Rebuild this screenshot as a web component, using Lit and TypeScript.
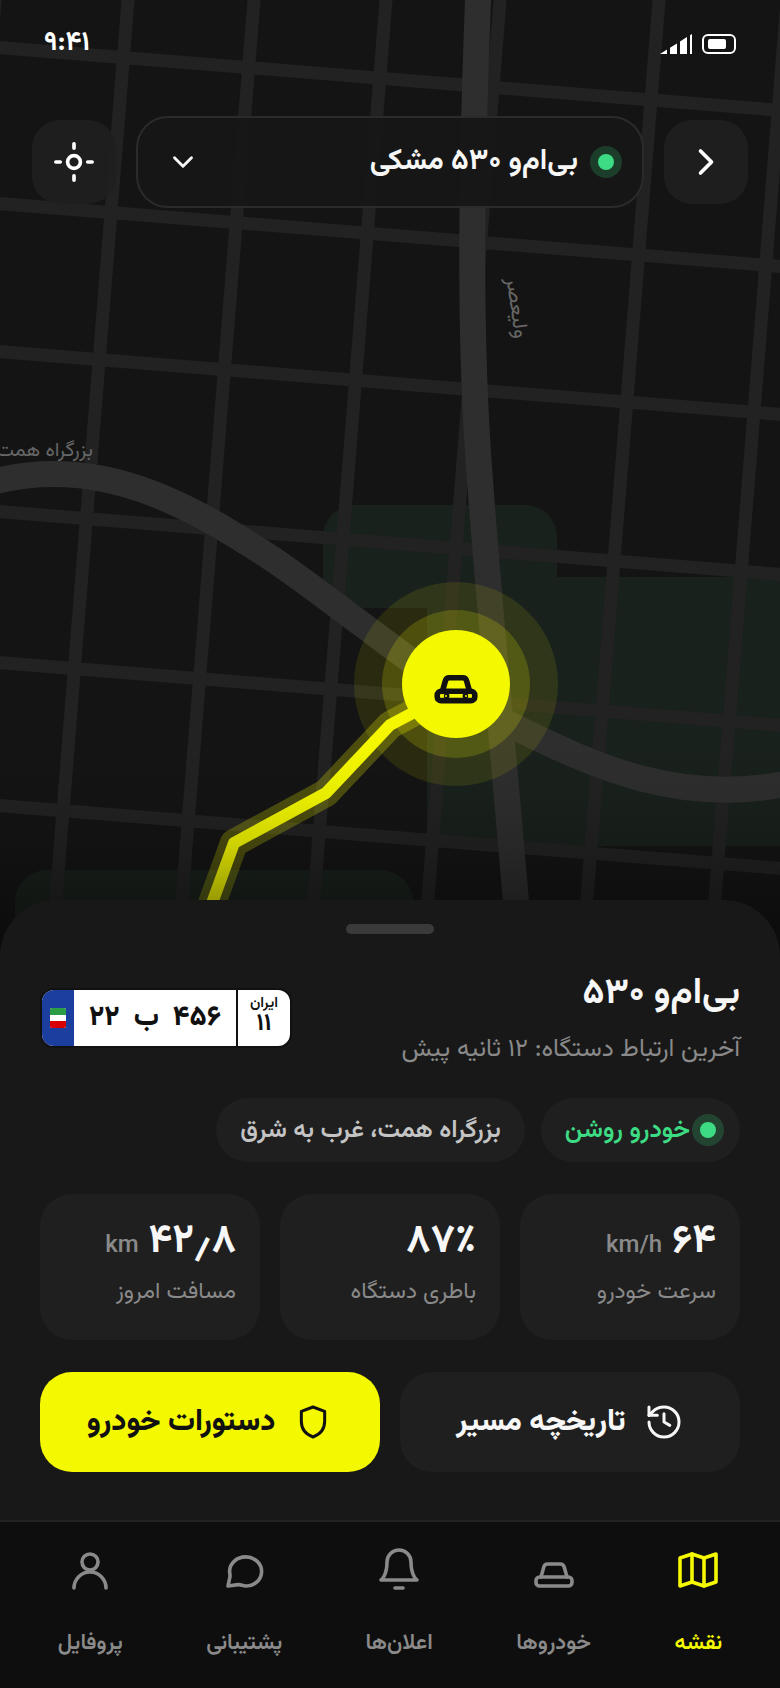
import { LitElement, html, svg, css } from "lit";
import { customElement, property } from "lit/decorators.js";
import { classMap } from "lit/directives/class-map.js";

const carBody = svg`
  <path d="M5.5 15.5 6.9 10.5A2 2 0 0 1 8.8 9h6.4a2 2 0 0 1 1.9 1.5l1.4 5" />
  <rect x="3" y="15.5" width="18" height="4.5" rx="1.8" />`;

const icons = {
  forward: svg`<path d="m9 6 6 6-6 6" />`,
  down: svg`<path d="m6 9 6 6 6-6" />`,
  locate: svg`<circle cx="12" cy="12" r="3.5" /><path d="M12 2.1v2.4M12 19.5v2.4M2.1 12h2.4M19.5 12h2.4" />`,
  history: svg`<path d="M3 12a9 9 0 1 0 9-9 9.75 9.75 0 0 0-6.74 2.74L3 8" /><path d="M3 3v5h5" /><path d="M12 7v5l3.5 2" />`,
  shield: svg`<path d="m12 3 7 2.6v6c0 4.8-2.8 7.9-7 9.4-4.2-1.5-7-4.6-7-9.4v-6z" />`,
  map: svg`<path d="M9 4 3 6v14l6-2 6 2 6-2V4l-6 2z" /><path d="M9 4v14M15 6v14" />`,
  car: carBody,
  bell: svg`<path d="M18 8a6 6 0 0 0-12 0c0 7-3 9-3 9h18s-3-2-3-9" /><path d="M10 21h4" />`,
  chat: svg`<path d="M20.8 12.7a7.7 7.3 0 0 1-7.9 7.3c-1.4 0-2.5-.8-3.8-.7L4 20l1-4.7c.1-1-.2-1.7-.2-2.7a8 7.2 0 0 1 16 .1z" />`,
  user: svg`<circle cx="12" cy="8" r="4" /><path d="M4 21a8 8 0 0 1 16 0" />`,
};

type IconName = keyof typeof icons;

@customElement("line-icon")
class LineIcon extends LitElement {
  @property() name: IconName = "map";

  static styles = css`
    :host {
      display: block;
      flex: none;
      width: 40px;
      height: 40px;
    }
    .icon {
      display: block;
      width: 100%;
      height: 100%;
      fill: none;
      stroke: currentColor;
      stroke-width: var(--icon-stroke, 1.8);
      stroke-linecap: round;
      stroke-linejoin: round;
    }
  `;

  render() {
    return html`<svg class="icon" viewBox="0 0 24 24" aria-hidden="true">${icons[this.name]}</svg>`;
  }
}

const crossStreets = [48, 204, 352, 512, 663, 806, 960];
const longStreets = [-5, 128, 254, 386, 500, 659, 787];

@customElement("city-map")
class CityMap extends LitElement {
  static styles = css`
    :host {
      display: block;
    }
    .map {
      display: block;
      width: 100%;
      height: 100%;
    }
    .park {
      fill: #19211c;
    }
    .street {
      fill: none;
      stroke: #222222;
      stroke-width: 13;
    }
    .artery {
      fill: none;
      stroke: #2e2e2e;
      stroke-width: 26;
    }
    .label {
      fill: #666666;
      font-family: Vazirmatn, "DejaVu Sans", sans-serif;
      font-size: 20px;
      direction: rtl;
    }
    .label.avenue {
      font-size: 21px;
    }
    .casing {
      fill: none;
      stroke: #f4f800;
      stroke-opacity: 0.26;
      stroke-width: 28;
      stroke-linejoin: round;
    }
    .route {
      fill: none;
      stroke: #f4f800;
      stroke-width: 12;
      stroke-linejoin: round;
    }
    .halo {
      fill: #f4f800;
      fill-opacity: 0.1;
    }
    .halo.near {
      fill-opacity: 0.18;
    }
    .pin,
    .lamp {
      fill: #f4f800;
    }
    .car {
      fill: none;
      stroke: #111111;
      stroke-width: 2.7;
      stroke-linecap: round;
      stroke-linejoin: round;
    }
  `;

  render() {
    const route = "M456 690 390 725 326 793 234 843 192 958";
    return html`
      <svg class="map" viewBox="0 0 780 960" preserveAspectRatio="xMidYMin slice" role="img" aria-label="نقشه">
        <defs>
          <linearGradient id="dusk" x1="0" y1="0" x2="0" y2="1">
            <stop offset="0" stop-color="#050505" stop-opacity="0" />
            <stop offset="0.26" stop-color="#050505" stop-opacity="0.05" />
            <stop offset="0.48" stop-color="#050505" stop-opacity="0.16" />
            <stop offset="0.73" stop-color="#050505" stop-opacity="0.38" />
            <stop offset="1" stop-color="#050505" stop-opacity="0.6" />
          </linearGradient>
        </defs>
        <rect class="park" x="323" y="505" width="234" height="103" rx="32" />
        <rect class="park" x="323" y="560" width="104" height="48" />
        <rect class="park" x="427" y="577" width="360" height="269" />
        <rect class="park" x="15" y="870" width="398" height="120" rx="32" />
        ${crossStreets.map((y) => svg`<path class="street" d="M-20 ${y - 2}L800 ${y + 64}" />`)}
        ${longStreets.map((x) => svg`<path class="street" d="M${x + 1} -12L${x - 77} 960" />`)}
        <path class="artery" d="M-20 486 0 480C110 455 200 512 274 560C350 612 440 690 517 728S680 806 790 783" />
        <path class="artery" d="M478 -10V0C472 160 468 330 480 480C487 580 505 770 521 960" />
        <text class="label" x="93" y="456">بزرگراه همت</text>
        <text class="label avenue" transform="translate(515 339) rotate(82)">ولیعصر</text>
        <path class="casing" d=${route} />
        <path class="route" d=${route} />
        <rect x="0" y="740" width="780" height="220" fill="url(#dusk)" />
        <circle class="halo" cx="456" cy="684" r="102" />
        <circle class="halo near" cx="456" cy="684" r="74" />
        <circle class="pin" cx="456" cy="684" r="54" />
        <g class="car" transform="translate(431 659) scale(2.0833)">
          ${carBody}
          <path d="M7.5 17.75h.01M16.5 17.75h.01" />
        </g>
        <circle class="lamp" cx="446" cy="696" r="1" />
        <circle class="lamp" cx="466" cy="696" r="1" />
      </svg>
    `;
  }
}

@customElement("status-bar")
class StatusBar extends LitElement {
  static styles = css`
    :host {
      display: flex;
      justify-content: space-between;
      align-items: center;
      direction: ltr;
      height: 56px;
      padding: 16px 44px 0;
      color: #ffffff;
    }
    .time {
      font-size: 27px;
      font-weight: 700;
      line-height: 40px;
    }
    .system {
      display: flex;
      gap: 10px;
    }
    .signal {
      width: 32px;
      height: 20px;
      fill: currentColor;
    }
    .battery {
      box-sizing: border-box;
      width: 34px;
      height: 20px;
      padding: 3px 4px;
      border: 2px solid currentColor;
      border-radius: 6px;
    }
    .charge {
      width: 18px;
      height: 10px;
      border-radius: 2px;
      background: currentColor;
    }
  `;

  render() {
    return html`
      <span class="time">۹:۴۱</span>
      <div class="system">
        <svg class="signal" viewBox="0 0 32 20" aria-hidden="true">
          <path d="M0 20 7 15.6V20zM10 20v-6.2L17 9.4V20zM20 20V7.5L27 3.1V20zM30 20V1.2L32 0v20z" />
        </svg>
        <div class="battery"><div class="charge"></div></div>
      </div>
    `;
  }
}

@customElement("number-plate")
class NumberPlate extends LitElement {
  static styles = css`
    :host {
      display: flex;
      flex: none;
      height: 56px;
      overflow: hidden;
      border: 2px solid #111111;
      border-radius: 14px;
      background: #ffffff;
      color: #111111;
      font-weight: 700;
    }
    .region {
      display: flex;
      flex-direction: column;
      align-items: center;
      justify-content: center;
      width: 52px;
      padding-bottom: 4px;
      border-left: 2px solid #111111;
    }
    .country {
      font-size: 15px;
      line-height: 16px;
      font-weight: 600;
    }
    .code {
      font-size: 24px;
      line-height: 24px;
    }
    .number {
      display: flex;
      align-items: center;
      justify-content: center;
      gap: 14px;
      width: 162px;
      font-size: 28px;
      font-weight: 800;
      line-height: 56px;
    }
    .band {
      display: flex;
      align-items: center;
      justify-content: center;
      width: 32px;
      background: #1c3f9f;
    }
    .flag {
      display: grid;
      grid-template-rows: repeat(3, 1fr);
      width: 16px;
      height: 20px;
      overflow: hidden;
      border-radius: 2px;
      background: #ffffff;
    }
    .green {
      background: #2a9d45;
    }
    .red {
      grid-row: 3;
      background: #d80000;
    }
  `;

  render() {
    return html`
      <div class="region"><span class="country">ایران</span><span class="code">۱۱</span></div>
      <div class="number"><span>۴۵۶</span><span>ب</span><span>۲۲</span></div>
      <div class="band"><div class="flag"><i class="green"></i><i class="red"></i></div></div>
    `;
  }
}

const stats = [
  { value: "۶۴", unit: "km/h", label: "سرعت خودرو" },
  { value: "۸۷٪", unit: "", label: "باطری دستگاه" },
  { value: "۴۲٫۸", unit: "km", label: "مسافت امروز" },
];

const tabs: { icon: IconName; label: string; active?: boolean }[] = [
  { icon: "map", label: "نقشه", active: true },
  { icon: "car", label: "خودروها" },
  { icon: "bell", label: "اعلان‌ها" },
  { icon: "chat", label: "پشتیبانی" },
  { icon: "user", label: "پروفایل" },
];

@customElement("app-root")
class AppRoot extends LitElement {
  static styles = css`
    :host {
      position: relative;
      display: flex;
      flex-direction: column;
      min-height: 100vh;
      overflow: hidden;
      direction: rtl;
      background: #141414;
      color: #f7f7f7;
      font-family: Vazirmatn, "DejaVu Sans", sans-serif;
    }
    button {
      margin: 0;
      border: 0;
      padding: 0;
      color: inherit;
      font: inherit;
      cursor: pointer;
    }
    .backdrop {
      position: absolute;
      inset: 0 0 auto;
      height: 960px;
    }
    .overlay {
      position: relative;
      flex: 1 0 900px;
    }
    .toolbar {
      display: grid;
      grid-template-columns: 84px 1fr 84px;
      align-items: center;
      gap: 20px;
      padding: 44px 32px 0;
    }
    .square {
      display: grid;
      place-items: center;
      height: 84px;
      border-radius: 28px;
      background: rgba(31, 31, 31, 0.94);
      color: #ffffff;
      --icon-stroke: 2;
    }
    .square line-icon {
      width: 44px;
      height: 44px;
    }
    .picker {
      display: flex;
      align-items: center;
      gap: 20px;
      box-sizing: border-box;
      height: 92px;
      padding: 0 28px;
      border: 2px solid #2b2b2b;
      border-radius: 32px;
      background: rgba(23, 23, 23, 0.97);
      font-size: 29px;
      font-weight: 700;
      text-align: right;
    }
    .picker line-icon {
      width: 34px;
      height: 34px;
      margin-inline-start: auto;
      --icon-stroke: 2;
    }
    .dot {
      flex: none;
      width: 16px;
      height: 16px;
      border-radius: 50%;
      background: #3ddc84;
      box-shadow: 0 0 0 8px rgba(61, 220, 132, 0.2);
    }
    .sheet {
      position: relative;
      display: flex;
      flex-direction: column;
      gap: 32px;
      padding: 24px 40px 48px;
      border-radius: 56px 56px 0 0;
      background: #181818;
    }
    .handle {
      align-self: center;
      width: 88px;
      height: 10px;
      margin-bottom: -4px;
      border-radius: 5px;
      background: #3a3a3a;
    }
    .head {
      display: flex;
      align-items: center;
      justify-content: space-between;
      margin-bottom: -8px;
    }
    .title {
      margin: 0;
      font-size: 36px;
      font-weight: 700;
      line-height: 64px;
    }
    .seen {
      margin: 0;
      color: #8a8a8a;
      font-size: 25px;
      line-height: 48px;
    }
    .chips {
      display: flex;
      gap: 16px;
    }
    .chip {
      display: flex;
      align-items: center;
      gap: 10px;
      height: 64px;
      padding: 0 24px;
      border-radius: 32px;
      background: #1f1f1f;
      color: #c4c4c4;
      font-size: 25px;
      font-weight: 600;
    }
    .chip.on {
      color: #3ddc84;
    }
    .stats {
      display: grid;
      grid-template-columns: repeat(3, 1fr);
      gap: 20px;
    }
    .stat {
      box-sizing: border-box;
      height: 146px;
      padding: 20px 24px;
      border-radius: 32px;
      background: #1f1f1f;
    }
    .value {
      display: flex;
      align-items: baseline;
      gap: 10px;
      height: 58px;
      font-size: 40px;
      font-weight: 700;
      line-height: 56px;
    }
    .unit {
      color: #8a8a8a;
      font-size: 24px;
      font-weight: 500;
    }
    .caption {
      color: #8a8a8a;
      font-size: 23px;
      line-height: 40px;
    }
    .actions {
      display: grid;
      grid-template-columns: 1fr 1fr;
      gap: 20px;
    }
    .action {
      display: flex;
      align-items: center;
      justify-content: center;
      gap: 18px;
      height: 100px;
      border-radius: 32px;
      background: #1f1f1f;
      font-size: 30px;
      font-weight: 800;
    }
    .action.primary {
      background: #f4f800;
      color: #111111;
    }
    .tabs {
      position: relative;
      display: flex;
      justify-content: space-around;
      box-sizing: border-box;
      min-height: 168px;
      padding: 24px 16px 0;
      border-top: 2px solid #222222;
      background: #0e0e0e;
    }
    .tab {
      display: flex;
      flex-direction: column;
      align-items: center;
      gap: 30px;
      color: #8a8a8a;
      font-size: 22px;
      font-weight: 600;
      line-height: 40px;
      text-decoration: none;
    }
    .tab line-icon {
      width: 48px;
      height: 48px;
    }
    .tab.active {
      color: #f4f800;
    }
  `;

  render() {
    return html`
      <city-map class="backdrop"></city-map>
      <div class="overlay">
        <status-bar></status-bar>
        <header class="toolbar">
          <button class="square" aria-label="بازگشت"><line-icon name="forward"></line-icon></button>
          <button class="picker" aria-haspopup="listbox">
            <span class="dot"></span>
            <span>بی‌ام‌و ۵۳۰ مشکی</span>
            <line-icon name="down"></line-icon>
          </button>
          <button class="square" aria-label="مکان من"><line-icon name="locate"></line-icon></button>
        </header>
      </div>

      <section class="sheet">
        <div class="handle"></div>
        <div class="head">
          <div>
            <h1 class="title">بی‌ام‌و ۵۳۰</h1>
            <p class="seen">آخرین ارتباط دستگاه: ۱۲ ثانیه پیش</p>
          </div>
          <number-plate></number-plate>
        </div>
        <div class="chips">
          <span class="chip on"><span class="dot"></span>خودرو روشن</span>
          <span class="chip">بزرگراه همت، غرب به شرق</span>
        </div>
        <div class="stats">
          ${stats.map(
            (s) => html`
              <div class="stat">
                <div class="value">
                  <bdi dir="ltr">${s.value}</bdi>
                  ${s.unit ? html`<span class="unit">${s.unit}</span>` : null}
                </div>
                <div class="caption">${s.label}</div>
              </div>
            `
          )}
        </div>
        <div class="actions">
          <button class="action"><line-icon name="history"></line-icon>تاریخچه مسیر</button>
          <button class="action primary"><line-icon name="shield"></line-icon>دستورات خودرو</button>
        </div>
      </section>

      <nav class="tabs">
        ${tabs.map(
          (t) => html`
            <a class=${classMap({ tab: true, active: !!t.active })} href="#">
              <line-icon name=${t.icon}></line-icon>${t.label}
            </a>
          `
        )}
      </nav>
    `;
  }
}
